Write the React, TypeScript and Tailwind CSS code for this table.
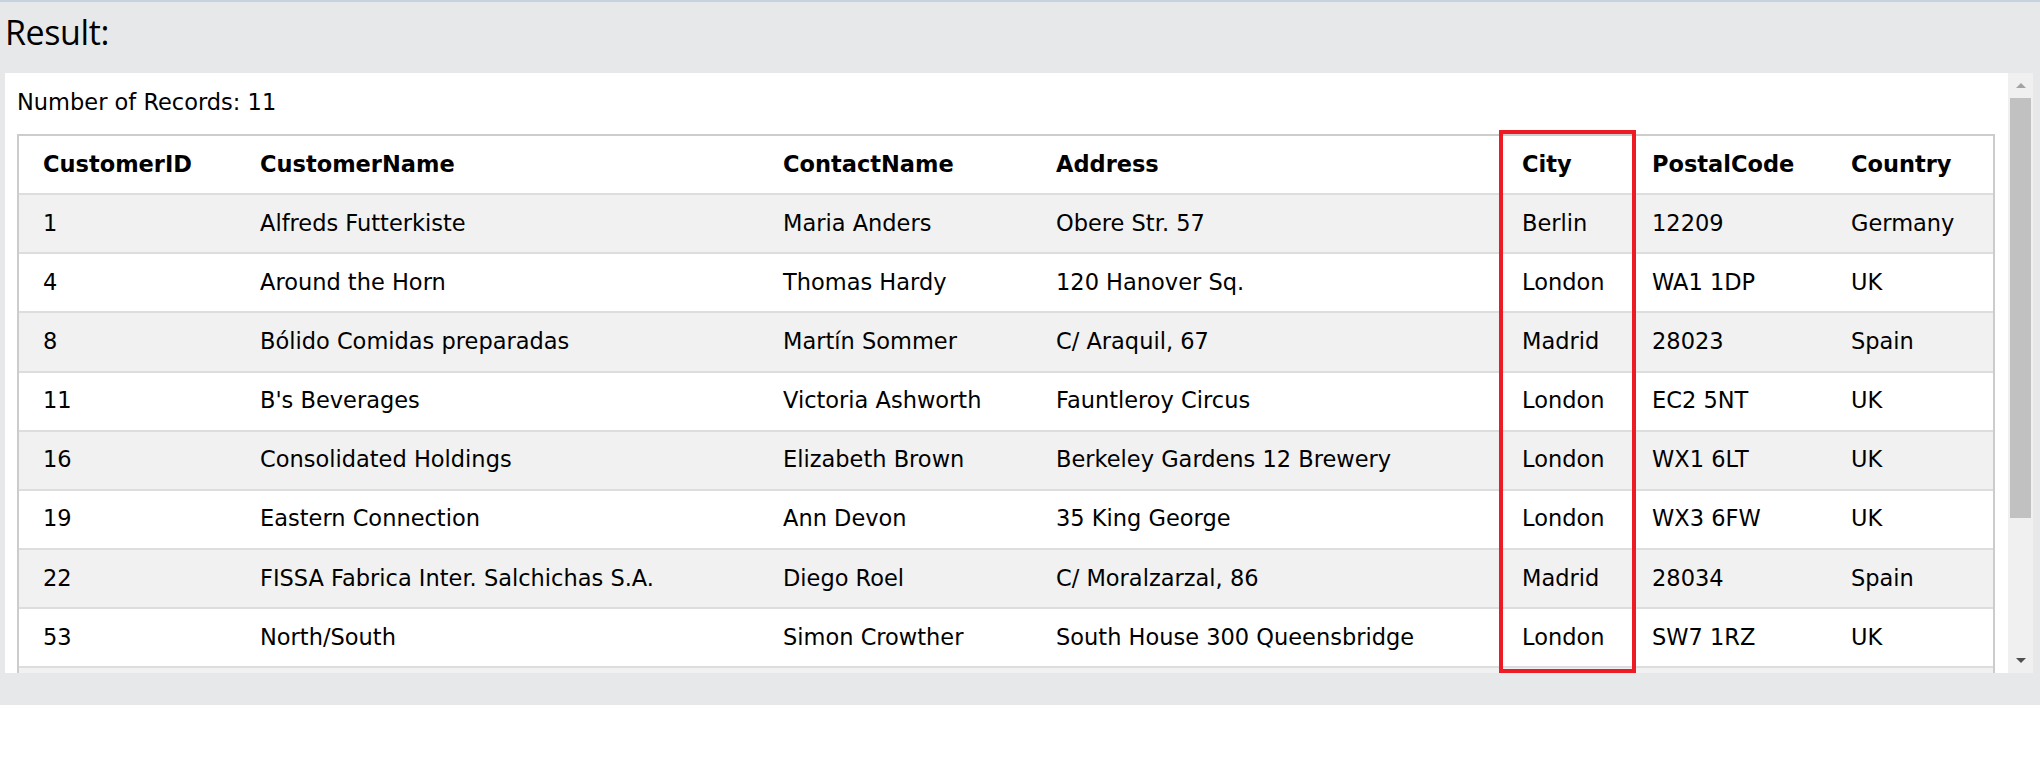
import React from "react"

const columns = ["CustomerID", "CustomerName", "ContactName", "Address", "City", "PostalCode", "Country"]

const rows = [
  ["1", "Alfreds Futterkiste", "Maria Anders", "Obere Str. 57", "Berlin", "12209", "Germany"],
  ["4", "Around the Horn", "Thomas Hardy", "120 Hanover Sq.", "London", "WA1 1DP", "UK"],
  ["8", "Bólido Comidas preparadas", "Martín Sommer", "C/ Araquil, 67", "Madrid", "28023", "Spain"],
  ["11", "B's Beverages", "Victoria Ashworth", "Fauntleroy Circus", "London", "EC2 5NT", "UK"],
  ["16", "Consolidated Holdings", "Elizabeth Brown", "Berkeley Gardens 12 Brewery", "London", "WX1 6LT", "UK"],
  ["19", "Eastern Connection", "Ann Devon", "35 King George", "London", "WX3 6FW", "UK"],
  ["22", "FISSA Fabrica Inter. Salchichas S.A.", "Diego Roel", "C/ Moralzarzal, 86", "Madrid", "28034", "Spain"],
  ["53", "North/South", "Simon Crowther", "South House 300 Queensbridge", "London", "SW7 1RZ", "UK"],
]

const grid = "grid grid-cols-[229px_523px_273px_466px_130px_199px_153.5px]"

function Row({ cells, head, striped }: { cells: string[]; head?: boolean; striped?: boolean }) {
  return (
    <div
      className={`${grid} h-[59.15px] border-b-2 border-[#dddddd] ${striped ? "bg-[#f1f1f1]" : "bg-white"} ${
        head ? "font-bold" : ""
      }`}
    >
      {cells.map((c, i) => (
        <div key={i} className={`flex items-center whitespace-nowrap ${i === 0 ? "pl-[24px]" : "pl-[12px]"}`}>
          {c}
        </div>
      ))}
    </div>
  )
}

function Scrollbar() {
  return (
    <div className="w-[25px] bg-[#f0f0f0] flex flex-col">
      <div className="h-[25px] flex items-center justify-center">
        <div className="w-0 h-0 border-l-[5.5px] border-r-[5.5px] border-b-[5px] border-l-transparent border-r-transparent border-b-[#a3a3a3]" />
      </div>
      <div className="h-[420px] mx-[2px] bg-[#c1c1c1]" />
      <div className="flex-1" />
      <div className="h-[25px] flex items-center justify-center">
        <div className="w-0 h-0 border-l-[5.5px] border-r-[5.5px] border-t-[5px] border-l-transparent border-r-transparent border-t-[#505050]" />
      </div>
    </div>
  )
}

export default function App() {
  return (
    <div className="w-[2040px] h-[776px] bg-white">
      <div className="bg-[#e7e8ea] border-t-2 border-[#c5d2e0] pl-[5px] pr-[7px] pb-[32px]">
        <div className="h-[71px] pt-[12.8px] text-[34px] leading-[34px] tracking-[-0.4px] text-black font-['Open_Sans',sans-serif]">
          Result:
        </div>
        <div className="relative h-[600px] bg-white flex">
          <div className="flex-1 overflow-hidden pl-[12px] pt-[12.7px] text-[22.5px] leading-[33.75px] text-black font-['DejaVu_Sans',sans-serif]">
            <div>Number of Records: 11</div>
            <div className="mt-[14.5px] w-[1977.5px] border-x-2 border-t-2 border-[#cccccc]">
              <Row cells={columns} head />
              {rows.map((r, i) => (
                <Row key={r[0]} cells={r} striped={i % 2 === 0} />
              ))}
              {/* next rows are scrolled out of view */}
              <div className="h-[59.15px] bg-[#f1f1f1]" />
            </div>
          </div>
          <Scrollbar />
          <div className="absolute left-[1494px] top-[57px] w-[136.5px] h-[543px] border-[4.5px] border-[#ed1c24]" />
        </div>
      </div>
    </div>
  )
}
